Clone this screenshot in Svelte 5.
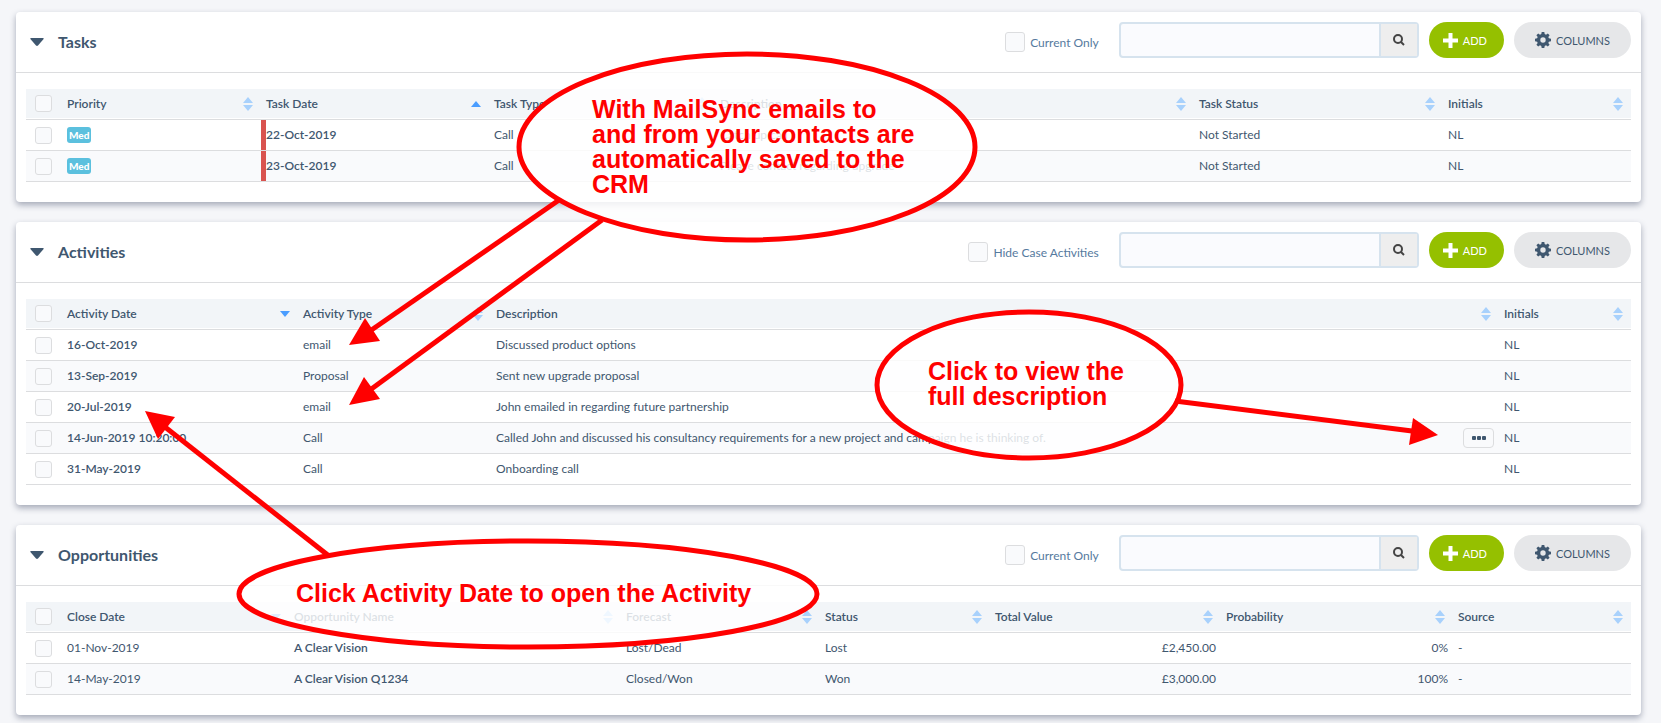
<script lang="ts">
  interface Column {
    label: string;
    weight: number;
    sort?: 'both' | 'asc' | 'desc';
    kind?: 'tag' | 'due' | 'link' | 'amount' | 'long';
  }

  interface Panel {
    id: string;
    title: string;
    filter: string;
    columns: Column[];
    rows: string[][];
  }

  const CHECK_WEIGHT = 36;

  const panels: Panel[] = [
    {
      id: 'tasks',
      title: 'Tasks',
      filter: 'Current Only',
      columns: [
        { label: 'Priority', weight: 199, kind: 'tag' },
        { label: 'Task Date', weight: 228, sort: 'asc', kind: 'due' },
        { label: 'Task Type', weight: 226 },
        { label: 'Description', weight: 479 },
        { label: 'Task Status', weight: 249 },
        { label: 'Initials', weight: 188 }
      ],
      rows: [
        ['Med', '22-Oct-2019', 'Call', 'Catch up call', 'Not Started', 'NL'],
        ['Med', '23-Oct-2019', 'Call', 'Please contact regarding upgrade', 'Not Started', 'NL']
      ]
    },
    {
      id: 'activities',
      title: 'Activities',
      filter: 'Hide Case Activities',
      columns: [
        { label: 'Activity Date', weight: 236, sort: 'desc', kind: 'link' },
        { label: 'Activity Type', weight: 193 },
        { label: 'Description', weight: 1008, kind: 'long' },
        { label: 'Initials', weight: 132 }
      ],
      rows: [
        ['16-Oct-2019', 'email', 'Discussed product options', 'NL'],
        ['13-Sep-2019', 'Proposal', 'Sent new upgrade proposal', 'NL'],
        ['20-Jul-2019', 'email', 'John emailed in regarding future partnership', 'NL'],
        [
          '14-Jun-2019 10:20:00',
          'Call',
          'Called John and discussed his consultancy requirements for a new project and campaign he is thinking of.',
          'NL'
        ],
        ['31-May-2019', 'Call', 'Onboarding call', 'NL']
      ]
    },
    {
      id: 'opportunities',
      title: 'Opportunities',
      filter: 'Current Only',
      columns: [
        { label: 'Close Date', weight: 227, sort: 'desc' },
        { label: 'Opportunity Name', weight: 332, kind: 'link' },
        { label: 'Forecast', weight: 199 },
        { label: 'Status', weight: 170 },
        { label: 'Total Value', weight: 231, kind: 'amount' },
        { label: 'Probability', weight: 232, kind: 'amount' },
        { label: 'Source', weight: 178 }
      ],
      rows: [
        ['01-Nov-2019', 'A Clear Vision', 'Lost/Dead', 'Lost', '£2,450.00', '0%', '-'],
        ['14-May-2019', 'A Clear Vision Q1234', 'Closed/Won', 'Won', '£3,000.00', '100%', '-']
      ]
    }
  ];

  // Descriptions longer than this get a "more" button
  const MAX_DESC = 80;

  const callouts = [
    {
      cx: 747, cy: 147, rx: 228, ry: 93, x: 592, y: 118,
      lines: ['With MailSync emails to', 'and from your contacts are', 'automatically saved to the', 'CRM']
    },
    { cx: 1029, cy: 385, rx: 152, ry: 73, x: 928, y: 380, lines: ['Click to view the', 'full description'] },
    { cx: 528, cy: 594, rx: 289, ry: 53, x: 296, y: 602, lines: ['Click Activity Date to open the Activity'] }
  ];

  const arrows = [
    { line: [559, 200, 370, 331], head: '349,345 365,318 380,341' },
    { line: [602, 220, 370, 390], head: '349,405 364,377 380,399' },
    { line: [329, 556, 165, 427], head: '145,411 175,417 158,439' },
    { line: [1175, 401, 1412, 431], head: '1438,435 1413,418 1409,445' }
  ];

  function pct(weight: number, columns: Column[]): number {
    const total = columns.reduce((acc, c) => acc + c.weight, CHECK_WEIGHT);
    return (weight / total) * 100;
  }
</script>

<main>
  {#each panels as p (p.id)}
    <section class="panel">
      <header>
        <button class="toggle" aria-label="Collapse {p.title}">
          <svg width="14" height="8" viewBox="0 0 14 8"><path d="M1 0h12q1 0 .6 1L8 7.500q-1 .8-2 0L.4 1Q0 0 1 0z" /></svg>
        </button>
        <h2>{p.title}</h2>
        <label class="filter"><input type="checkbox" />{p.filter}</label>
        <div class="search">
          <input type="text" aria-label="Search {p.title}" />
          <button aria-label="Search">
            <svg width="12" height="12" viewBox="0 0 12 12">
              <circle cx="5" cy="5" r="4" /><path d="M8 8L11 11" />
            </svg>
          </button>
        </div>
        <button class="pill add">
          <svg width="15" height="15" viewBox="0 0 15 15"><path d="M5.500 0h4v5.500H15v4H9.500V15h-4V9.500H0v-4h5.500z" /></svg>
          ADD
        </button>
        <button class="pill">
          <svg width="16" height="16" viewBox="0 0 16 16">
            <path
              fill-rule="evenodd"
              d="M6.700 0h2.600l.4 2.100 1.300.6 1.800-1.300 1.800 1.800-1.300 1.800.6 1.300 2.100.4v2.600l-2.100.4-.6 1.300 1.300 1.800-1.800 1.800-1.800-1.300-1.300.6-.4 2.100H6.700l-.4-2.100-1.300-.6-1.800 1.300-1.800-1.800 1.300-1.800-.6-1.300L0 9.300V6.700l2.100-.4.6-1.300-1.300-1.800 1.800-1.800L5 2.700l1.300-.6zM8 5.300a2.700 2.700 0 1 0 0 5.400 2.700 2.700 0 0 0 0-5.400z"
            />
          </svg>
          COLUMNS
        </button>
      </header>

      <table>
        <colgroup>
          <col style="width: {pct(CHECK_WEIGHT, p.columns)}%" />
          {#each p.columns as c}
            <col style="width: {pct(c.weight, p.columns)}%" />
          {/each}
        </colgroup>
        <thead>
          <tr>
            <th class="check"><input type="checkbox" aria-label="Select all" /></th>
            {#each p.columns as c}
              <th>
                <div class="head">
                  {c.label}
                  <svg class={c.sort ?? 'both'} width="10" height="14" viewBox="0 0 10 14">
                    {#if c.sort === 'asc'}
                      <path d="M0 10l5-6 5 6z" />
                    {:else if c.sort === 'desc'}
                      <path d="M0 4h10l-5 6z" />
                    {:else}
                      <path d="M0 6l5-6 5 6zM0 8h10l-5 6z" />
                    {/if}
                  </svg>
                </div>
              </th>
            {/each}
          </tr>
        </thead>
        <tbody>
          {#each p.rows as row}
            <tr>
              <td class="check"><input type="checkbox" aria-label="Select {row[0]}" /></td>
              {#each row as cell, i}
                {@const kind = p.columns[i].kind}
                <td class={kind}>
                  {#if kind === 'tag'}
                    <span class="badge">{cell}</span>
                  {:else if kind === 'link' || kind === 'due'}
                    <a href="#{p.id}">{cell}</a>
                  {:else if kind === 'long' && cell.length > MAX_DESC}
                    <div class="desc">
                      <span>{cell}</span>
                      <button class="more" aria-label="View full description">
                        <svg width="14" height="4" viewBox="0 0 14 4">
                          <rect width="4" height="4" rx="1" /><rect x="5" width="4" height="4" rx="1" /><rect x="10" width="4" height="4" rx="1" />
                        </svg>
                      </button>
                    </div>
                  {:else}
                    {cell}
                  {/if}
                </td>
              {/each}
            </tr>
          {/each}
        </tbody>
      </table>
    </section>
  {/each}

  <!-- Help callouts drawn over the panels -->
  <svg class="notes" viewBox="0 0 1661 723">
    {#each callouts as c}
      <ellipse cx={c.cx} cy={c.cy} rx={c.rx} ry={c.ry} />
      <text>
        {#each c.lines as line, i}
          <tspan x={c.x} y={c.y + i * 25}>{line}</tspan>
        {/each}
      </text>
    {/each}
    {#each arrows as a}
      <line x1={a.line[0]} y1={a.line[1]} x2={a.line[2]} y2={a.line[3]} />
      <polygon points={a.head} />
    {/each}
  </svg>
</main>

<style>
  :global(body) { background: #f5f6f9; }
  main {
    position: relative;
    display: flex;
    flex-direction: column;
    gap: 20px;
    padding: 12px 20px 8px 16px;
    font-family: Lato, "Liberation Sans", sans-serif;
    font-size: 12px;
    color: #3f576f;
  }
  button, input { font: inherit; color: inherit; margin: 0; }
  button { border: 0; padding: 0; background: none; cursor: pointer; }
  svg { display: block; fill: currentColor; }

  .panel {
    background: #fff;
    border-radius: 4px;
    padding-bottom: 20px;
    box-shadow: 0 3px 6px rgba(45, 55, 85, 0.4);
  }
  header {
    display: flex;
    align-items: center;
    gap: 10px;
    height: 56px;
    padding: 0 10px 4px 14px;
    border-bottom: 1px solid #dcdddf;
  }
  .toggle { padding-top: 4px; }
  h2 { margin: 0 auto 0 4px; padding-top: 4px; font-size: 16px; line-height: 20px; font-weight: 700; }
  .filter { display: flex; align-items: center; gap: 5px; margin-right: 10px; padding-top: 4px; color: #567a9e; }

  input[type='checkbox'] {
    appearance: none;
    box-sizing: border-box;
    display: block;
    width: 17px;
    height: 17px;
    border: 1px solid #dcdddf;
    border-radius: 3px;
    background: #f9fafc;
  }
  .filter input[type='checkbox'] { width: 20px; height: 20px; }

  .search {
    display: flex;
    box-sizing: border-box;
    width: 300px;
    height: 36px;
    border: 2px solid #d6e3ee;
    border-radius: 4px;
    background: #fafbfe;
  }
  .search input { flex: 1; min-width: 0; border: 0; padding: 0 8px; background: none; }
  .search button {
    display: flex;
    align-items: center;
    justify-content: center;
    width: 38px;
    border-left: 2px solid #d6e3ee;
    background: #eee;
    color: #444;
  }
  .search svg { fill: none; stroke: currentColor; stroke-width: 2; }
  .pill {
    display: flex;
    align-items: center;
    gap: 5px;
    height: 36px;
    padding: 0 21px;
    border-radius: 18px;
    background: #e6e7e9;
    font-size: 11px;
  }
  .add { padding: 0 17px 0 14px; background: #95c000; color: #fff; }

  table {
    width: calc(100% - 20px);
    margin: 16px 10px 0;
    table-layout: fixed;
    border-collapse: separate;
    border-spacing: 0;
  }
  th, td {
    box-sizing: border-box;
    height: 31px;
    padding: 0 5px;
    border-bottom: 1px solid #dcdddf;
    text-align: left;
    white-space: nowrap;
    line-height: 16px;
  }
  th { background: #f2f5f8; background-clip: content-box; font-weight: 600; padding: 0 0 1px; }
  .head { display: flex; align-items: center; justify-content: space-between; height: 29px; padding: 0 8px 0 5px; }
  .head svg { color: #a8d1fc; }
  .head svg.asc, .head svg.desc { color: #4a9dff; }
  tbody tr:nth-child(even) { background: #f9fafc; }
  th.check input, td.check input { margin-left: 9px; }
  td.check { padding: 0; }
  td a { color: inherit; font-weight: 600; text-decoration: none; }
  .due { box-shadow: inset 5px 0 #d9534f; }
  .amount { text-align: right; }
  .badge {
    display: block;
    width: max-content;
    padding: 0 2px;
    border-radius: 3px;
    background: #5bc0de;
    color: #fff;
    font-size: 10px;
    font-weight: 900;
  }
  .desc { display: flex; align-items: center; justify-content: space-between; }
  .more {
    display: flex;
    align-items: center;
    justify-content: center;
    box-sizing: border-box;
    width: 31px;
    height: 20px;
    border: 1px solid #dcdddf;
    border-radius: 4px;
    background: #f9fafc;
  }

  .notes { position: absolute; top: 0; left: 0; width: 100%; pointer-events: none; }
  .notes ellipse { fill: rgba(255, 255, 255, 0.82); stroke: #f00; stroke-width: 5; }
  .notes line { stroke: #f00; stroke-width: 5; }
  .notes polygon { fill: #f00; }
  .notes text { fill: #f00; font-family: "Liberation Sans", Arial, sans-serif; font-size: 25px; font-weight: 700; }
</style>
